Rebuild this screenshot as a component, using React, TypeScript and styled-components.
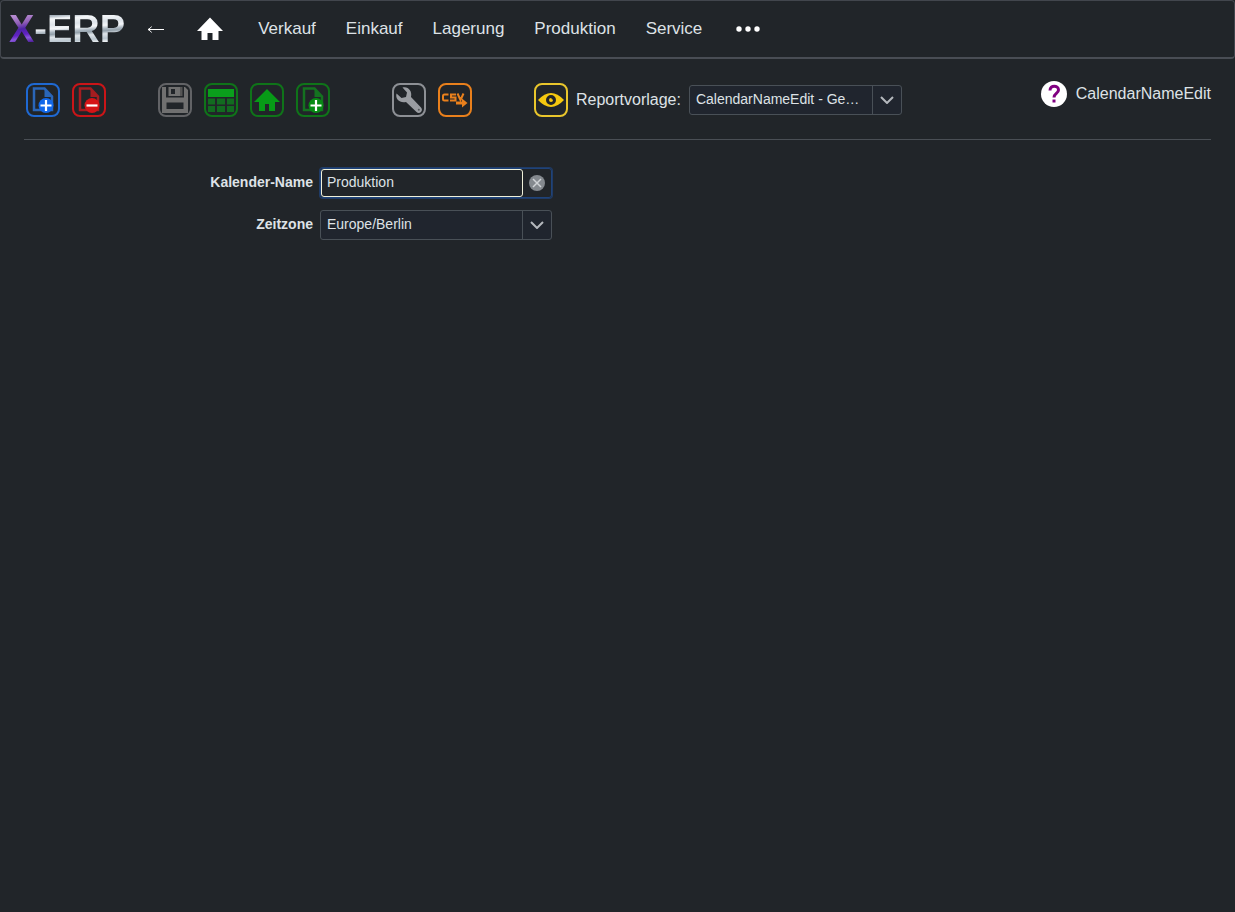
import React, { useState } from "react";
import styled, { createGlobalStyle } from "styled-components";

const GlobalStyle = createGlobalStyle`
  * { box-sizing: border-box; }
  body {
    margin: 0;
    min-height: 100vh;
    background: #212529;
    color: #dee2e6;
    font: 16px/24px "Liberation Sans", Arial, sans-serif;
  }
  button, input, select { font: inherit; color: inherit; }
  svg { display: block; }
`;

const Header = styled.header`
  display: flex;
  align-items: center;
  height: 59px;
  padding: 0 8px;
  border: 1px solid #42464d;
  border-bottom: 2px solid #494d54;
  border-radius: 4px;
`;

const Logo = styled.a`
  display: flex;
  font-size: 38px;
  line-height: 44px;
  font-weight: bold;
  text-decoration: none;
`;

const LogoPart = styled.span<{ $fill: string }>`
  background: ${(p) => p.$fill};
  background-clip: text;
  -webkit-background-clip: text;
  color: transparent;
`;

const IconButton = styled.button<{ $gap: number }>`
  margin: 0 0 0 ${(p) => p.$gap}px;
  padding: 0;
  border: 0;
  background: none;
  color: #fff;
  cursor: pointer;
`;

const Nav = styled.nav`
  display: flex;
  gap: 30px;
  margin-left: 35px;
  font-size: 17px;
`;

const NavLink = styled.a`
  color: inherit;
  text-decoration: none;
`;

const Main = styled.main`
  padding: 0 24px;
`;

const TopRow = styled.div`
  display: flex;
  justify-content: space-between;
  align-items: flex-start;
  padding: 22px 0;
  border-bottom: 1px solid #4a4f55;
`;

const Toolbar = styled.div`
  display: flex;
  align-items: center;
  gap: 62px;
  padding: 2px 2px 0;
`;

const Group = styled.div<{ $after?: number }>`
  display: flex;
  align-items: center;
  gap: 12px;
  margin-right: ${(p) => p.$after || 0}px;
`;

const Tool = styled.button<{ $color: string }>`
  display: grid;
  place-items: center;
  width: 34px;
  height: 34px;
  padding: 0;
  border: 2px solid ${(p) => p.$color};
  border-radius: 8px;
  background: none;
  color: ${(p) => p.$color};
  cursor: pointer;
`;

const Report = styled.div`
  display: flex;
  align-items: center;
  gap: 8px;
`;

const Help = styled.div`
  display: flex;
  align-items: center;
  gap: 9px;
`;

const HelpButton = styled.button`
  display: grid;
  place-items: center;
  width: 26px;
  height: 26px;
  padding: 0;
  border: 0;
  border-radius: 50%;
  background: #fff;
  color: #800080;
  cursor: pointer;
`;

const Form = styled.form`
  display: grid;
  grid-template-columns: 289px 232px;
  gap: 12px 7px;
  padding-top: 28px;
`;

const Label = styled.label`
  font-size: 14px;
  font-weight: bold;
  line-height: 28px;
  text-align: right;
`;

const TextBox = styled.div`
  display: grid;
  grid-template-columns: 1fr 28px;
  height: 30px;
  border: 1px solid #1f4379;
  border-radius: 3px;
  box-shadow: 0 0 0 1px #1f3b66;
`;

const TextInput = styled.input`
  min-width: 0;
  padding: 0 5px 2px;
  border: 1px solid #eff0d9;
  border-radius: 3px;
  outline: none;
  background: #212529;
  font-size: 14px;
`;

const ClearButton = styled.button`
  display: grid;
  place-items: center;
  padding: 0;
  border: 0;
  background: none;
  cursor: pointer;
`;

const SelectBox = styled.div<{ $width: number }>`
  display: grid;
  grid-template-columns: 1fr 29px;
  width: ${(p) => p.$width}px;
  height: 30px;
  border: 1px solid #495057;
  border-radius: 3px;
  background: #20252e;
`;

const Select = styled.select`
  grid-area: 1 / 1 / 2 / 3;
  min-width: 0;
  padding: 0 38px 2px 6px;
  border: 0;
  outline: none;
  appearance: none;
  background: none;
  font-size: 14px;
  text-overflow: ellipsis;
`;

const Arrow = styled.span`
  grid-area: 1 / 2 / 2 / 3;
  display: grid;
  place-items: center;
  border-left: 1px solid #495057;
  pointer-events: none;
`;

const silver =
  "linear-gradient(176deg, #a9b3bd 20%, #f5f7f9 26%, #dde3e9 38%, #f5f7fa 46%, #a9b5bf 53%, #93a0aa 57%, #dfe5ea 63%, #bac6cf 72%, #f1f4f6 79%)";
const violet =
  "linear-gradient(170deg, #b58ad0 22%, #8d5bb5 38%, #4d22a5 50%, #6122c2 62%, #8957dc 70%, #451691 82%)";

const Chevron = () => (
  <svg width="14" height="8" viewBox="0 0 14 8" fill="none" stroke="#b4b8bd" strokeWidth="2">
    <path d="M1 1l6 6 6-6" />
  </svg>
);

const Page = ({ page, badge, minus }: { page: string; badge: string; minus?: boolean }) => (
  <svg width="30" height="30" viewBox="0 0 30 30" fill="none">
    <path d="M6 3.500h10.500l7.500 8v13.500H6z" stroke={page} strokeWidth="2.500" />
    <path d="M16.500 3v9h8.500z" fill={page} />
    <circle cx="18" cy="20.500" r="7.500" fill={badge} />
    <path d={minus ? "M12.500 20.500h11" : "M12.500 20.500h11M18 15v11"} stroke="#fff" strokeWidth="2.200" />
  </svg>
);

const HouseShape = () => (
  <svg width="26" height="26" viewBox="0 0 26 26" fill="currentColor">
    <path d="M13 1.500L0 15h4.500v9h6v-7h5v7h6v-9H26z" />
  </svg>
);

const Floppy = () => (
  <svg width="30" height="30" viewBox="0 0 30 30" fill="#707070">
    <path fillRule="evenodd" d="M2 2h4v10.500h18V2h1l3 3v23H2zM6.500 17.500h17v6.500h-17z" />
    <path fillRule="evenodd" d="M8.500 2H20v9H8.500zM11 4h4v5h-4z" />
    <path d="M20 2h2.500v9H20z" fill="#555" />
  </svg>
);

const TableIcon = () => (
  <svg width="30" height="30" viewBox="0 0 30 30">
    <path d="M2 4h26v8H2z" fill="#0a9e1c" />
    <path
      d="M2 13.500h7v6H2zM11 13.500h8v6h-8zM21 13.500h7v6h-7zM2 21h7v6H2zM11 21h8v6h-8zM21 21h7v6h-7z"
      fill="#126b20"
    />
  </svg>
);

const Wrench = () => (
  <svg width="30" height="30" viewBox="0 0 30 30">
    <path
      d="M8.500 2.500l4.500 5-1 4.500-4.500 1-5-4.500C1 14 6 18.500 12 17l10.500 10c1.500 1.500 3.500 1 4.500 0s1.500-3 0-4.500L17 12C18.500 6 14 1 8.500 2.500z"
      fill="#9a9da2"
    />
    <circle cx="24.800" cy="24.800" r="1" fill="#55585c" />
  </svg>
);

const CsvIcon = () => (
  <svg width="30" height="30" viewBox="0 0 30 30" fill="none" stroke="#e9801c" strokeWidth="2">
    <path d="M8.500 9.500H4.500Q3 9.500 3 11v3Q3 15.500 4.500 15.500h4M16 9.500h-5v3h4.500v3H10M17.500 8.500l3 6.500 3-6.500" />
    <path d="M16 18h7" strokeWidth="3" />
    <path d="M22 13.500l5.500 4.500-5.500 4.500z" fill="#e9801c" stroke="none" />
  </svg>
);

const Eye = () => (
  <svg width="30" height="30" viewBox="0 0 30 30">
    <path d="M2 15Q15 1 28 15 15 29 2 15z" fill="#f5c80f" />
    <circle cx="15" cy="15" r="3.500" fill="#f5c80f" stroke="#212529" strokeWidth="3" />
    <circle cx="16.500" cy="13.500" r="1" fill="#212529" />
  </svg>
);

export default function App() {
  const [name, setName] = useState("Produktion");
  return (
    <>
      <GlobalStyle />
      <Header>
        <Logo href="#">
          <LogoPart $fill={violet}>X</LogoPart>
          <LogoPart $fill={silver}>-ERP</LogoPart>
        </Logo>
        <IconButton $gap={22} aria-label="Zurück">
          <svg width="18" height="10" viewBox="0 0 18 10" fill="none" stroke="currentColor" strokeWidth="1">
            <path d="M17 5.500H1.500M4.500 2.500Q3.500 4.500 1 5.500 3.500 6.500 4.500 8.500" />
          </svg>
        </IconButton>
        <IconButton $gap={32} aria-label="Startseite">
          <HouseShape />
        </IconButton>
        <Nav>
          {["Verkauf", "Einkauf", "Lagerung", "Produktion", "Service"].map((item) => (
            <NavLink href="#" key={item}>{item}</NavLink>
          ))}
        </Nav>
        <IconButton $gap={34} aria-label="Mehr">
          <svg width="24" height="6" viewBox="0 0 24 6" fill="currentColor">
            <circle cx="3" cy="3" r="2.700" />
            <circle cx="12" cy="3" r="2.700" />
            <circle cx="21" cy="3" r="2.700" />
          </svg>
        </IconButton>
      </Header>
      <Main>
        <TopRow>
          <Toolbar>
            <Group $after={-10}>
              <Tool $color="#1f69d2" aria-label="Neu"><Page page="#2a66b8" badge="#1268ea" /></Tool>
              <Tool $color="#cb1518" aria-label="Löschen"><Page page="#a51d20" badge="#d51417" minus /></Tool>
            </Group>
            <Group>
              <Tool $color="#626366" aria-label="Speichern"><Floppy /></Tool>
              <Tool $color="#0f7419" aria-label="Speichern und zur Liste"><TableIcon /></Tool>
              <Tool $color="#0f7419" aria-label="Speichern und zur Startseite">
                <svg width="30" height="30" viewBox="0 0 30 30" fill="#079b17">
                  <path d="M15 4L2 17h5v9h6v-7h4v7h6v-9h5z" />
                </svg>
              </Tool>
              <Tool $color="#0f7419" aria-label="Speichern und neu"><Page page="#147220" badge="#078b14" /></Tool>
            </Group>
            <Group>
              <Tool $color="#8d9095" aria-label="Werkzeuge"><Wrench /></Tool>
              <Tool $color="#e9801c" aria-label="CSV-Export"><CsvIcon /></Tool>
            </Group>
            <Report>
              <Tool $color="#e9c62c" aria-label="Vorschau"><Eye /></Tool>
              <label htmlFor="report">Reportvorlage:</label>
              <SelectBox $width={213}>
                <Select id="report">
                  <option>CalendarNameEdit - General</option>
                </Select>
                <Arrow><Chevron /></Arrow>
              </SelectBox>
            </Report>
          </Toolbar>
          <Help>
            <HelpButton aria-label="Hilfe">
              <svg width="14" height="20" viewBox="0 0 14 20" fill="none" stroke="currentColor" strokeWidth="3">
                <path d="M3 6.500C3 .5 11.500 1 11.500 6c0 3.500-4.500 3.500-4.500 7.500" />
                <path d="M7 15.500v3" />
              </svg>
            </HelpButton>
            <span>CalendarNameEdit</span>
          </Help>
        </TopRow>
        <Form>
          <Label htmlFor="name">Kalender-Name</Label>
          <TextBox>
            <TextInput id="name" value={name} onChange={(e) => setName(e.target.value)} />
            <ClearButton type="button" aria-label="Leeren" onClick={() => setName("")}>
              <svg width="16" height="16" viewBox="0 0 16 16">
                <circle cx="8" cy="8" r="8" fill="#84898e" />
                <path d="M4 4l8 8M12 4l-8 8" stroke="#d0d3d6" strokeWidth="1.500" />
              </svg>
            </ClearButton>
          </TextBox>
          <Label htmlFor="zone">Zeitzone</Label>
          <SelectBox $width={232}>
            <Select id="zone">
              <option>Europe/Berlin</option>
            </Select>
            <Arrow><Chevron /></Arrow>
          </SelectBox>
        </Form>
      </Main>
    </>
  );
}
